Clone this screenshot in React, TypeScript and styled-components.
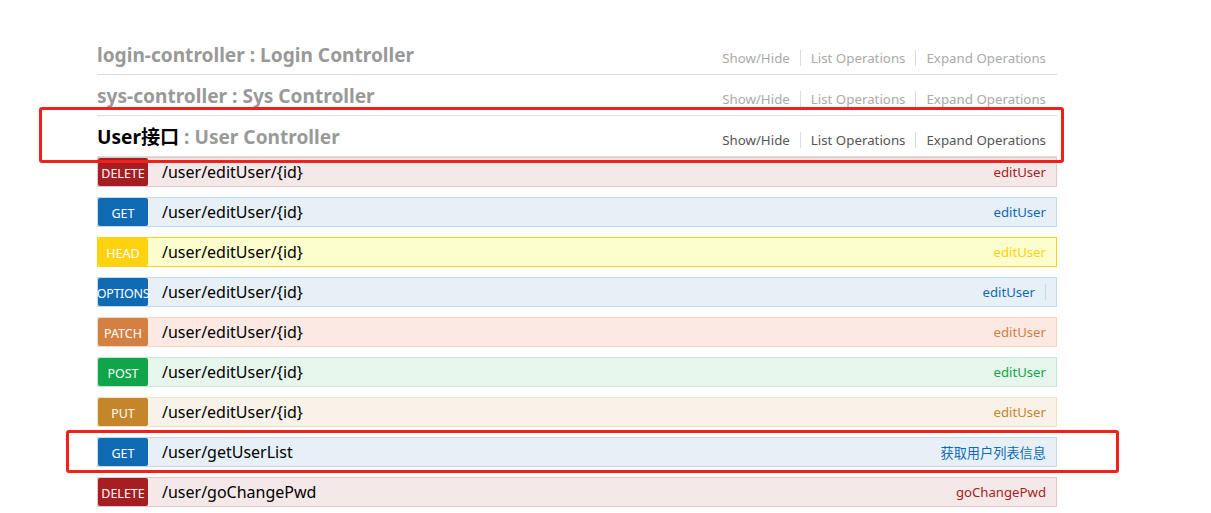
import React from "react";
import styled, { createGlobalStyle } from "styled-components";

const Global = createGlobalStyle`
  html, body { margin: 0; padding: 0; background: #fff; }
  body { font-family: "Noto Sans", "Noto Sans CJK SC", sans-serif; }
`;

type Method = "DELETE" | "GET" | "HEAD" | "OPTIONS" | "PATCH" | "POST" | "PUT";

const palette: Record<Method, { bg: string; border: string; main: string }> = {
  DELETE: { bg: "#f5e8e8", border: "#e8c6c7", main: "#a41e22" },
  GET: { bg: "#e7f0f7", border: "#c3d9ec", main: "#0f6ab4" },
  HEAD: { bg: "#fcffcd", border: "#ffd20f", main: "#ffd20f" },
  OPTIONS: { bg: "#e7f0f7", border: "#c3d9ec", main: "#0f6ab4" },
  PATCH: { bg: "#fce9e3", border: "#f5d5c3", main: "#d38042" },
  POST: { bg: "#e7f6ec", border: "#c3e8d1", main: "#10a54a" },
  PUT: { bg: "#f9f2e9", border: "#f0e0ca", main: "#c5862b" },
};

const Page = styled.div`
  position: relative;
  width: 1211px;
  height: 513px;
  overflow: hidden;
  padding: 34px 0 0 97px;
  box-sizing: border-box;
`;

const Column = styled.div`
  width: 960px;
  display: flex;
  flex-direction: column;
`;

const ResourceHeading = styled.div`
  height: 40px;
  border-bottom: 1px solid #dddddd;
  display: flex;
  align-items: center;
  justify-content: space-between;
`;

const Title = styled.h2`
  margin: 1px 0 0;
  font-size: 19.1px;
  line-height: 24px;
  height: 24px;
  font-weight: bold;
  color: #999999;
`;

const TitleName = styled.span<{ $active?: boolean }>`
  color: ${(p) => (p.$active ? "#000" : "#999999")};
`;

const Options = styled.ul`
  list-style: none;
  margin: 7px 0 0;
  padding: 0 11px 0 0;
  display: flex;
  align-items: center;
`;

const OptionItem = styled.li<{ $active?: boolean; $last?: boolean }>`
  font-size: 13.3px;
  color: ${(p) => (p.$active ? "#555555" : "#aaaaaa")};
  padding: 0 10px;
  line-height: 16px;
  border-right: ${(p) => (p.$last ? "none" : "1px solid #dddddd")};
  padding-right: ${(p) => (p.$last ? "0" : "10px")};
`;

const Operations = styled.ul`
  list-style: none;
  margin: 0;
  padding: 0;
  display: flex;
  flex-direction: column;
  gap: 10px;
`;

const OpRow = styled.li<{ $m: Method }>`
  height: 28px;
  display: flex;
  align-items: center;
  background: ${(p) => palette[p.$m].bg};
  border: 1px solid ${(p) => palette[p.$m].border};
`;

const Badge = styled.span<{ $m: Method }>`
  width: 50px;
  height: 28px;
  flex: none;
  display: flex;
  align-items: center;
  justify-content: center;
  padding-top: 2px;
  box-sizing: border-box;
  background: ${(p) => palette[p.$m].main};
  color: #fff;
  border-radius: 2px;
  font-size: 12.5px;
  white-space: nowrap;
  overflow: visible;
`;

const BadgeText = styled.span<{ $wide?: boolean }>`
  ${(p) => (p.$wide ? "margin-left: 0; margin-right: auto; letter-spacing: -0.3px;" : "")}
`;

const Path = styled.span`
  flex: 1;
  padding-left: 14px;
  font-size: 16px;
  color: #000;
`;

const OpSummary = styled.span<{ $m: Method; $sep?: boolean }>`
  font-size: 13.2px;
  color: ${(p) => palette[p.$m].main};
  padding-right: 10px;
  ${(p) => (p.$sep ? "border-right: 1px solid #c3d9ec; margin-right: 10px; line-height: 16px;" : "")}
`;

const Annotation = styled.div<{ $l: number; $t: number; $w: number; $h: number }>`
  position: absolute;
  left: ${(p) => p.$l}px;
  top: ${(p) => p.$t}px;
  width: ${(p) => p.$w}px;
  height: ${(p) => p.$h}px;
  border: 3px solid #f2201b;
  border-radius: 3px;
  box-sizing: border-box;
  pointer-events: none;
`;

const resources = [
  { name: "login-controller", desc: "Login Controller", active: false },
  { name: "sys-controller", desc: "Sys Controller", active: false },
  { name: "User接口", desc: "User Controller", active: true },
];

const ops: { m: Method; path: string; summary: string; sep?: boolean }[] = [
  { m: "DELETE", path: "/user/editUser/{id}", summary: "editUser" },
  { m: "GET", path: "/user/editUser/{id}", summary: "editUser" },
  { m: "HEAD", path: "/user/editUser/{id}", summary: "editUser" },
  { m: "OPTIONS", path: "/user/editUser/{id}", summary: "editUser", sep: true },
  { m: "PATCH", path: "/user/editUser/{id}", summary: "editUser" },
  { m: "POST", path: "/user/editUser/{id}", summary: "editUser" },
  { m: "PUT", path: "/user/editUser/{id}", summary: "editUser" },
  { m: "GET", path: "/user/getUserList", summary: "获取用户列表信息" },
  { m: "DELETE", path: "/user/goChangePwd", summary: "goChangePwd" },
];

export default function App() {
  return (
    <>
      <Global />
      <Page>
        <Column>
          {resources.map((r) => (
            <ResourceHeading key={r.name}>
              <Title>
                <TitleName $active={r.active}>{r.name}</TitleName> : {r.desc}
              </Title>
              <Options>
                <OptionItem $active={r.active}>Show/Hide</OptionItem>
                <OptionItem $active={r.active}>List Operations</OptionItem>
                <OptionItem $active={r.active} $last>
                  Expand Operations
                </OptionItem>
              </Options>
            </ResourceHeading>
          ))}
          <Operations>
            {ops.map((o, i) => (
              <OpRow key={i} $m={o.m}>
                <Badge $m={o.m}>
                  <BadgeText $wide={o.m === "OPTIONS"}>{o.m}</BadgeText>
                </Badge>
                <Path>{o.path}</Path>
                <OpSummary $m={o.m} $sep={o.sep}>
                  {o.summary}
                </OpSummary>
              </OpRow>
            ))}
          </Operations>
        </Column>
        <Annotation $l={39} $t={107} $w={1025} $h={56} />
        <Annotation $l={66} $t={430} $w={1053} $h={43} />
      </Page>
    </>
  );
}
